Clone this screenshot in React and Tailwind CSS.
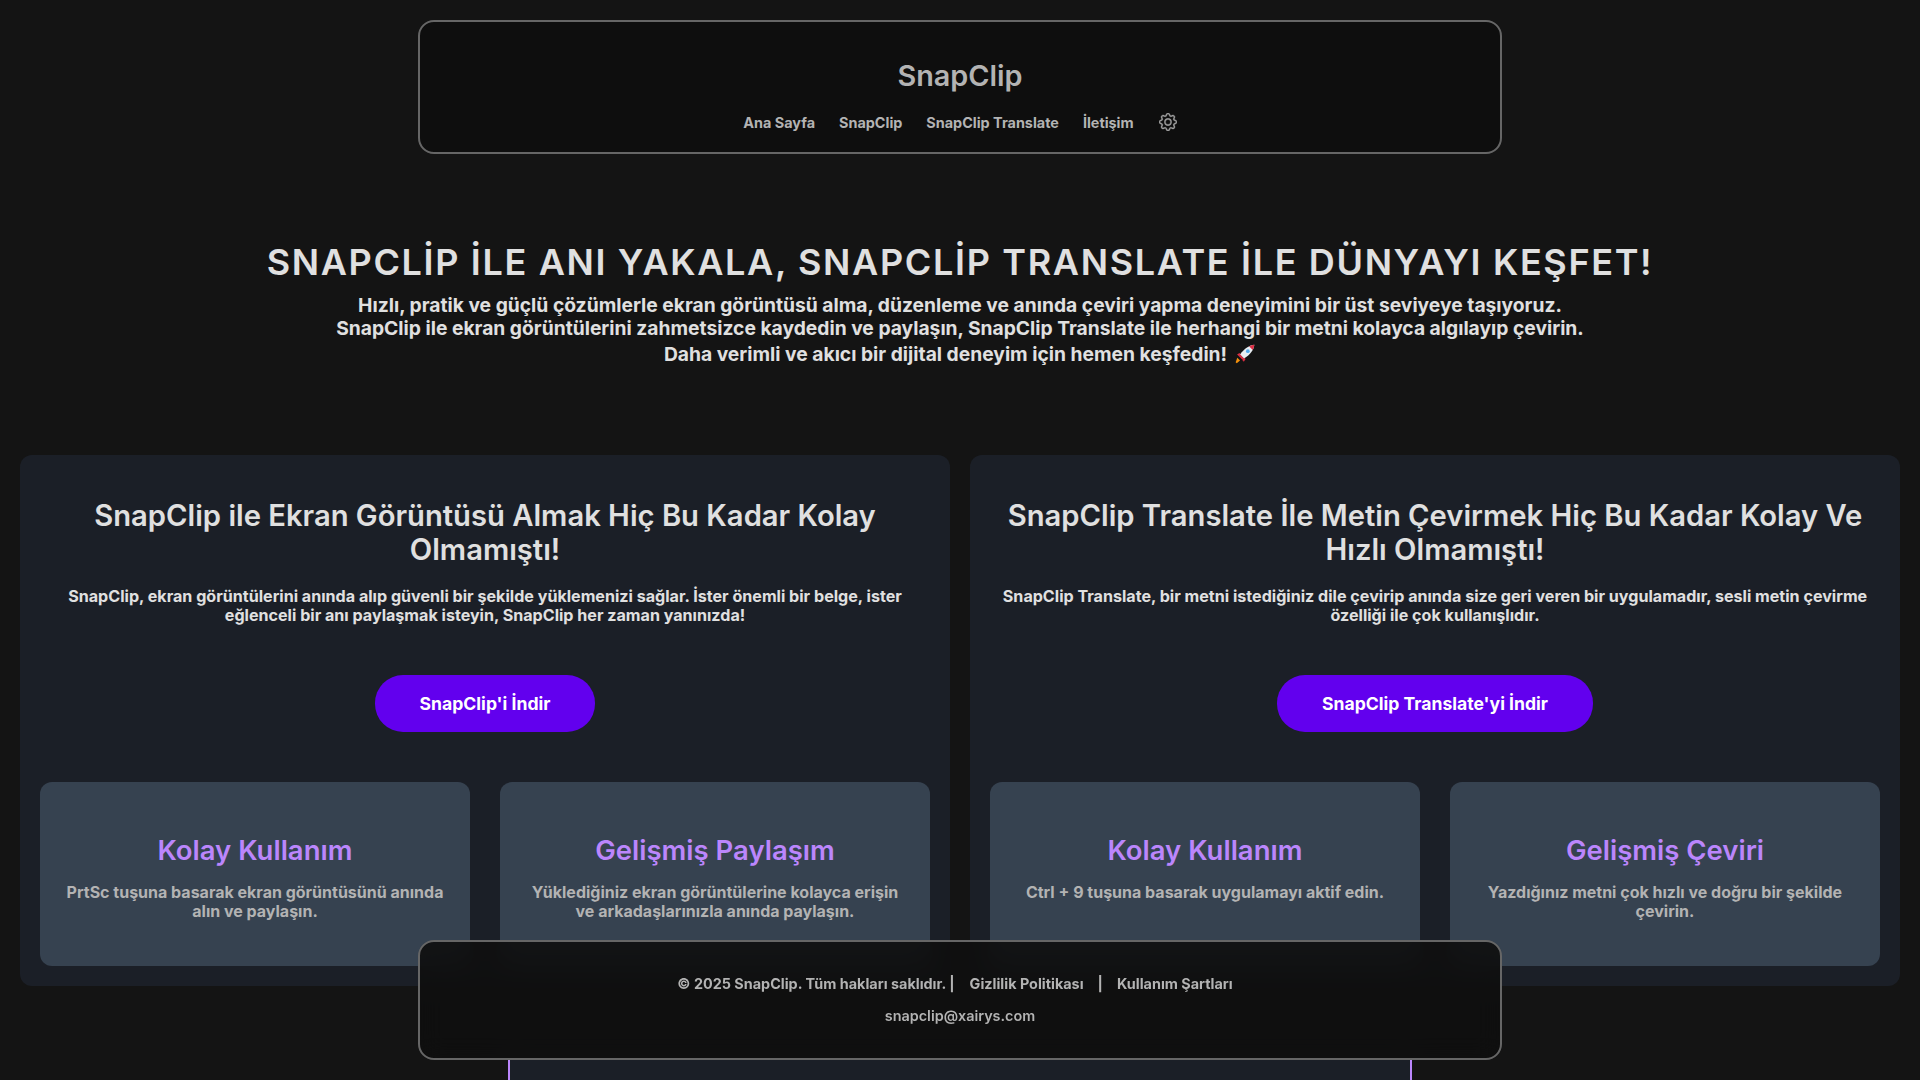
import { BsGear } from "react-icons/bs";

const PANELS = [
  {
    title: "SnapClip ile Ekran Görüntüsü Almak Hiç Bu Kadar Kolay Olmamıştı!",
    text: "SnapClip, ekran görüntülerini anında alıp güvenli bir şekilde yüklemenizi sağlar. İster önemli bir belge, ister eğlenceli bir anı paylaşmak isteyin, SnapClip her zaman yanınızda!",
    button: "SnapClip'i İndir",
    buttonWidth: "w-[220px]",
    features: [
      {
        title: "Kolay Kullanım",
        text: "PrtSc tuşuna basarak ekran görüntüsünü anında alın ve paylaşın.",
      },
      {
        title: "Gelişmiş Paylaşım",
        text: "Yüklediğiniz ekran görüntülerine kolayca erişin ve arkadaşlarınızla anında paylaşın.",
      },
    ],
  },
  {
    title: "SnapClip Translate İle Metin Çevirmek Hiç Bu Kadar Kolay Ve Hızlı Olmamıştı!",
    text: "SnapClip Translate, bir metni istediğiniz dile çevirip anında size geri veren bir uygulamadır, sesli metin çevirme özelliği ile çok kullanışlıdır.",
    button: "SnapClip Translate'yi İndir",
    buttonWidth: "w-[316px]",
    features: [
      {
        title: "Kolay Kullanım",
        text: "Ctrl + 9 tuşuna basarak uygulamayı aktif edin.",
      },
      {
        title: "Gelişmiş Çeviri",
        text: "Yazdığınız metni çok hızlı ve doğru bir şekilde çevirin.",
      },
    ],
  },
];

const NAV_LINKS = ["Ana Sayfa", "SnapClip", "SnapClip Translate", "İletişim"];

function Rocket() {
  return (
    <svg viewBox="0 0 20 20" className="inline-block w-[22px] h-[22px] ml-[7px] align-[-4px]">
      <path d="M3 13.5 5.500 16 2.500 18.500 1.500 17.500Z" fill="#f4900c" />
      <path d="M5 9 2.800 10.500 4.500 12 6.500 10.500Z" fill="#dd2e44" />
      <path d="M10.500 14.500 9 17 7.500 15.500 9 13.500Z" fill="#dd2e44" />
      <path d="M18.500 1.500C14 2 9.500 4.500 5.500 10.500L9 14C15 10.500 18 6 18.500 1.500Z" fill="#e8eef2" />
      <path d="M18.500 1.500C17 1.700 15.300 2.200 13.700 3L17 6.300C17.800 4.800 18.300 3.200 18.500 1.500Z" fill="#dd2e44" />
      <path d="M5.500 10.500 9 14 7.500 15 4.500 12Z" fill="#dd2e44" />
      <circle cx="12.600" cy="7.400" r="1.700" fill="#55acee" />
    </svg>
  );
}

function Panel({ panel }) {
  return (
    <div className="flex-1 bg-[#1b1f27] rounded-xl p-5 flex flex-col items-center h-[531px]">
      <h2 className="mt-[24px] text-[29.200px] leading-[34px] font-semibold text-[#e0e0e0] text-center">
        {panel.title}
      </h2>
      <p className="mt-[20px] text-[16.100px] leading-[19px] font-bold text-[#e0e0e0] text-center">
        {panel.text}
      </p>
      <button
        className={`mt-[50px] h-[57px] pt-[1px] shrink-0 ${panel.buttonWidth} rounded-[28px] bg-[#6200ee] text-white text-[17.600px] font-bold`}
      >
        {panel.button}
      </button>
      <div className="mt-[50px] w-full grid grid-cols-2 gap-[30px]">
        {panel.features.map((feature) => (
          <div
            key={feature.title}
            className="bg-[#364250] rounded-xl h-[184px] px-6 pt-[48px] text-center"
          >
            <h3 className="text-[27.500px] leading-[40px] font-semibold text-[#bb86fc]">
              {feature.title}
            </h3>
            <p className="mt-[13px] text-base leading-[19px] font-bold text-[#b3b3b3]">
              {feature.text}
            </p>
          </div>
        ))}
      </div>
    </div>
  );
}

export default function App() {
  return (
    <div className="h-screen overflow-hidden bg-[#141414] font-['Inter',sans-serif]">
      <header className="pt-5 flex justify-center">
        <div className="w-[1084px] h-[134px] bg-[#0e0e0e] border-2 border-[#666666] rounded-2xl flex flex-col items-center pt-[37px]">
          <h1 className="text-[28.800px] leading-[34px] font-semibold text-[#b3b3b3]">SnapClip</h1>
          <nav className="mt-[18px] flex items-center gap-6 h-6 text-[14.400px] font-bold text-[#b3b3b3]">
            {NAV_LINKS.map((link) => (
              <a key={link} href="#">
                {link}
              </a>
            ))}
            <BsGear
              className="w-[18px] h-[18px] mb-[3px] ml-[1px] text-[#a0a0a0]"
              stroke="currentColor"
              strokeWidth={0.35}
            />
          </nav>
        </div>
      </header>

      <section className="mt-[86px] text-center">
        <h2 className="text-[36px] leading-[44px] font-semibold tracking-[0.046em] text-[#e0e0e0]">
          SNAPCLİP İLE ANI YAKALA, SNAPCLİP TRANSLATE İLE DÜNYAYI KEŞFET!
        </h2>
        <p className="mt-[10px] text-[19.250px] leading-[23px] font-bold text-[#e0e0e0]">
          Hızlı, pratik ve güçlü çözümlerle ekran görüntüsü alma, düzenleme ve anında çeviri yapma deneyimini bir üst seviyeye taşıyoruz.
          <br />
          SnapClip ile ekran görüntülerini zahmetsizce kaydedin ve paylaşın, SnapClip Translate ile herhangi bir metni kolayca algılayıp çevirin.
          <br />
          <span className="inline-block mt-[3px]">
            Daha verimli ve akıcı bir dijital deneyim için hemen keşfedin!
            <Rocket />
          </span>
        </p>
      </section>

      <main className="mt-[89px] px-5 flex gap-5">
        {PANELS.map((panel) => (
          <Panel key={panel.button} panel={panel} />
        ))}
      </main>

      <section className="mt-[72px] mx-auto w-[904px] h-[300px] bg-[#1b1f27] border-x-2 border-[#bb86fc]" />

      <footer className="fixed left-1/2 -translate-x-1/2 bottom-[20px] w-[1084px] h-[120px] bg-[#0e0e0e]/90 backdrop-blur-md border-2 border-[#666666] rounded-2xl flex flex-col items-center pt-[32px] text-[14.400px] font-bold text-[#b3b3b3]">
        <div className="h-[20px] leading-[20px] flex mr-[10px]">
          <span>© 2025 SnapClip. Tüm hakları saklıdır. |</span>
          <a href="#" className="ml-[15px]">Gizlilik Politikası</a>
          <span className="ml-[14px]">|</span>
          <a href="#" className="ml-[14px]">Kullanım Şartları</a>
        </div>
        <a href="#" className="mt-[12px] leading-[20px] font-semibold">snapclip@xairys.com</a>
      </footer>
    </div>
  );
}
